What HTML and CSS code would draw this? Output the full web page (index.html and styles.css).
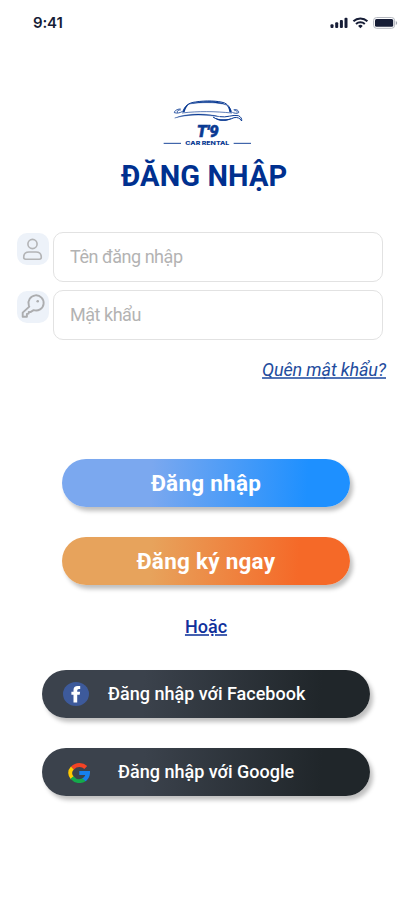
FILE: index.html
```html
<!DOCTYPE html>
<html lang="vi">
<head>
<meta charset="utf-8">
<meta name="viewport" content="width=device-width, initial-scale=1">
<title>Đăng nhập</title>
<link rel="stylesheet" href="styles.css">
</head>
<body>
<div class="screen">
  <header class="status">
    <span class="time">9:41</span>
    <svg class="status-icons" viewBox="0 0 68 14" fill="#161d36">
      <rect x="0.500" y="8.300" width="3" height="3.800" rx="1"/>
      <rect x="5.200" y="6.300" width="3" height="5.800" rx="1"/>
      <rect x="9.900" y="4" width="3" height="8.100" rx="1"/>
      <rect x="14.500" y="1.800" width="3" height="10.300" rx="1"/>
      <g fill="none" stroke="#161d36" stroke-width="2">
        <path d="M23.400 5.200a10.200 10.200 0 0 1 14 0"/>
        <path d="M26 8a6.400 6.400 0 0 1 8.800 0"/>
      </g>
      <path d="M28.100 9.900a3.400 3.400 0 0 1 4.600 0l-2.300 2.400z"/>
      <rect x="43.600" y="1.500" width="21" height="10.800" rx="3" fill="none" stroke="#b4b7bf"/>
      <rect x="45" y="3" width="18.200" height="7.800" rx="1.500"/>
      <path d="M65.800 5v4q1.400-.6 1.400-2t-1.400-2z" fill="#a5a8b2"/>
    </svg>
  </header>

  <svg class="logo" viewBox="36 24 276 144" fill="none" stroke="#0a3a93">
    <path d="M98 66C104 48 116 38 136 36C166 31 205 32 224 39C234 44 241 53 244 65" stroke-width="3"/>
    <path d="M117 42C165 30 208 32 229 45C209 38 165 35 117 42Z" fill="#0a3a93" stroke-width="1"/>
    <path d="M98 67C102 53 109 44 120 39C111 48 106 57 104 66Z" fill="#0a3a93" stroke="none"/>
    <path d="M225 41C237 47 243 56 245 68L238 66C237 54 233 48 225 41Z" fill="#0a3a93" stroke="none"/>
    <path d="M96 69C145 63 195 64 246 69" stroke-width="2"/>
    <path d="M74 84C120 66 178 72 210 80C180 77 130 69 74 84Z" fill="#0a3a93" stroke-width="1"/>
    <path d="M92 57C82 57 73 62 73 68C82 71 91 68 96 65M82 68C81 61 86 59 92 60M251 59C260 57 267 62 266 68C260 72 251 69 247 67M261 67C262 62 258 61 253 62" stroke-width="2.500"/>
    <path d="M210 80C228 84 249 73 265 77C273 80 276 87 275 93C270 84 262 81 252 83C234 92 208 95 189 81" stroke-width="3"/>
    <path d="M189 80C205 91 232 89 248 83C234 95 205 97 189 80Z" fill="#0a3a93" stroke="none"/>
    <text class="logo-name" x="140" y="140" textLength="66" lengthAdjust="spacingAndGlyphs">T'9</text>
    <path d="M41 160H93M251 160H303" stroke-width="2.800"/>
    <text class="logo-sub" x="106" y="165" textLength="132" lengthAdjust="spacingAndGlyphs">CAR RENTAL</text>
  </svg>

  <h1 class="title">ĐĂNG NHẬP</h1>

  <form class="form">
    <div class="field">
      <span class="field-icon">
        <svg viewBox="0 0 32 32" fill="none" stroke="#b3b4b6" stroke-width="1.600">
          <circle cx="15.500" cy="11" r="4.600"/>
          <path d="M6.700 24.300q0-5.300 5.300-5.300h7q5.300 0 5.300 5.300q0 1.900-1.900 1.900H8.600q-1.900 0-1.900-1.900z"/>
        </svg>
      </span>
      <input class="input" type="text" placeholder="Tên đăng nhập">
    </div>
    <div class="field">
      <span class="field-icon">
        <svg viewBox="0 0 32 32" fill="none" stroke="#acadaf" stroke-width="1.900" stroke-linejoin="round">
          <path d="M11.800 14.200A7.600 7.600 0 1 1 16.600 19.100L13.400 21.100L11.800 20.900L11.600 22.600L9.900 22.900V25.800H5.700V21.600L12.300 15.600Z"/>
          <circle cx="20.700" cy="10.300" r="1.300" fill="#acadaf" stroke="none"/>
        </svg>
      </span>
      <input class="input" type="password" placeholder="Mật khẩu">
    </div>
    <a class="forgot" href="#">Quên mật khẩu?</a>
  </form>

  <div class="actions">
    <button class="btn btn-login">Đăng nhập</button>
    <button class="btn btn-register">Đăng ký ngay</button>
  </div>

  <a class="or" href="#">Hoặc</a>

  <div class="socials">
    <button class="btn btn-social facebook">
      <svg class="fb" viewBox="0 0 26 24">
        <ellipse cx="13" cy="12" rx="13" ry="12" fill="#3d5a9b"/>
        <path d="M10.500 20.500v-7.700H8.400V9.700h2.100V8q0-4 4.300-4h2.400v3.100h-1.300q-1.700 0-1.700 1.500v1.100h2.900l-.4 3.100h-2.500v7.700z" fill="#fff"/>
      </svg>
      <span>Đăng nhập với Facebook</span>
    </button>
    <button class="btn btn-social google">
      <svg class="gg" viewBox="0 0 22 20" fill="none" stroke-width="4">
        <path d="M17.800 4.500C14.500 1.300 8.500 1 4.500 5" stroke="#f44325"/>
        <path d="M4.400 5C1.500 8 1.500 12 4.400 15" stroke="#ffc900"/>
        <path d="M4 14.500C7.500 18.700 12.500 19 16.500 16.500" stroke="#14a94b"/>
        <path d="M11.300 8H22C22.300 12.500 20.700 16 17.800 18.200L14.200 15.400C15.900 14.400 16.900 13.300 17.200 12H11.300Z" fill="#1680ee" stroke="none"/>
      </svg>
      <span>Đăng nhập với Google</span>
    </button>
  </div>
</div>
</body>
</html>
```
FILE: styles.css
```css
* { box-sizing: border-box; }

body {
  margin: 0;
  background: #fff;
  font-family: Roboto, "Noto Sans", sans-serif;
}

.screen {
  width: 412px;
  height: 917px;
  display: flex;
  flex-direction: column;
  overflow: hidden;
}

.status {
  height: 46px;
  padding: 0 14px 0 33px;
  display: flex;
  align-items: center;
  justify-content: space-between;
}

.time {
  font: 600 15px/20px Inter, sans-serif;
  letter-spacing: -.15px;
  color: #161d36;
}

.status-icons { width: 68px; height: 14px; }

.logo {
  width: 92px;
  height: 48px;
  margin: 52px 0 0 162px;
}

.logo-name {
  font: italic 900 47px Roboto, sans-serif;
  fill: #0a3a93;
  stroke: #0a3a93;
  stroke-width: 1.5px;
}

.logo-sub {
  font: 800 15px Inter, sans-serif;
  fill: #0a3a93;
  stroke: none;
}

.title {
  margin: 12px 0 0 121px;
  font-size: 29px;
  line-height: 36px;
  font-weight: 700;
  letter-spacing: .12px;
  color: #00308f;
  white-space: nowrap;
}

.form {
  margin-top: 38px;
  padding: 0 29px 0 17px;
  display: flex;
  flex-direction: column;
  gap: 8px;
}

.field {
  display: flex;
  gap: 4px;
}

.field-icon {
  width: 32px;
  height: 32px;
  margin-top: 1px;
  border-radius: 10px;
  background: #edf2f9;
}

.field-icon svg { display: block; }

.input {
  width: 330px;
  height: 50px;
  padding: 0 16px 2px;
  border: 1px solid #e2e2e2;
  border-radius: 10px;
  font: 400 18px Roboto, sans-serif;
  letter-spacing: -.47px;
  outline: none;
}

.input::placeholder { color: #b3b3b3; opacity: 1; }

.forgot {
  align-self: flex-end;
  margin: 10px -3px 0 0;
  font-size: 18px;
  line-height: 24px;
  font-style: italic;
  letter-spacing: -.13px;
  color: #234c9d;
  text-decoration: underline 2px #5274b6;
  text-decoration-skip-ink: none;
}

.actions {
  margin: 77px 62px 0;
  display: flex;
  flex-direction: column;
  gap: 30px;
}

.btn {
  height: 48px;
  padding: 0;
  border: 0;
  border-radius: 24px;
  color: #fff;
  font-family: Roboto, sans-serif;
  box-shadow: 3px 4px 4px rgba(0, 0, 0, .25);
}

.actions .btn {
  font-size: 22.5px;
  font-weight: 700;
  letter-spacing: .25px;
}

.btn-login { background: linear-gradient(93deg, #7ba8ef 31%, #1e90ff 85%); }
.btn-register { background: linear-gradient(93deg, #e7a35c 31%, #f56928 82%); }

.or {
  align-self: center;
  margin: 30px 0 0;
  font-size: 18px;
  line-height: 24px;
  font-weight: 500;
  color: #10309b;
  text-decoration: underline 2px #4560b0;
}

.socials {
  margin: 31px 42px 0;
  display: flex;
  flex-direction: column;
  gap: 30px;
}

.btn-social {
  display: flex;
  align-items: center;
  background: linear-gradient(93deg, #3b424c 31%, #20262a 85%);
  font-size: 18px;
  font-weight: 500;
}

.btn-social span { margin-top: -1px; }

.facebook { padding-left: 21px; gap: 19px; }
.google { padding-left: 26px; gap: 28px; }
.fb { width: 26px; height: 24px; }
.gg { width: 22px; height: 20px; margin-top: 2px; }
```
